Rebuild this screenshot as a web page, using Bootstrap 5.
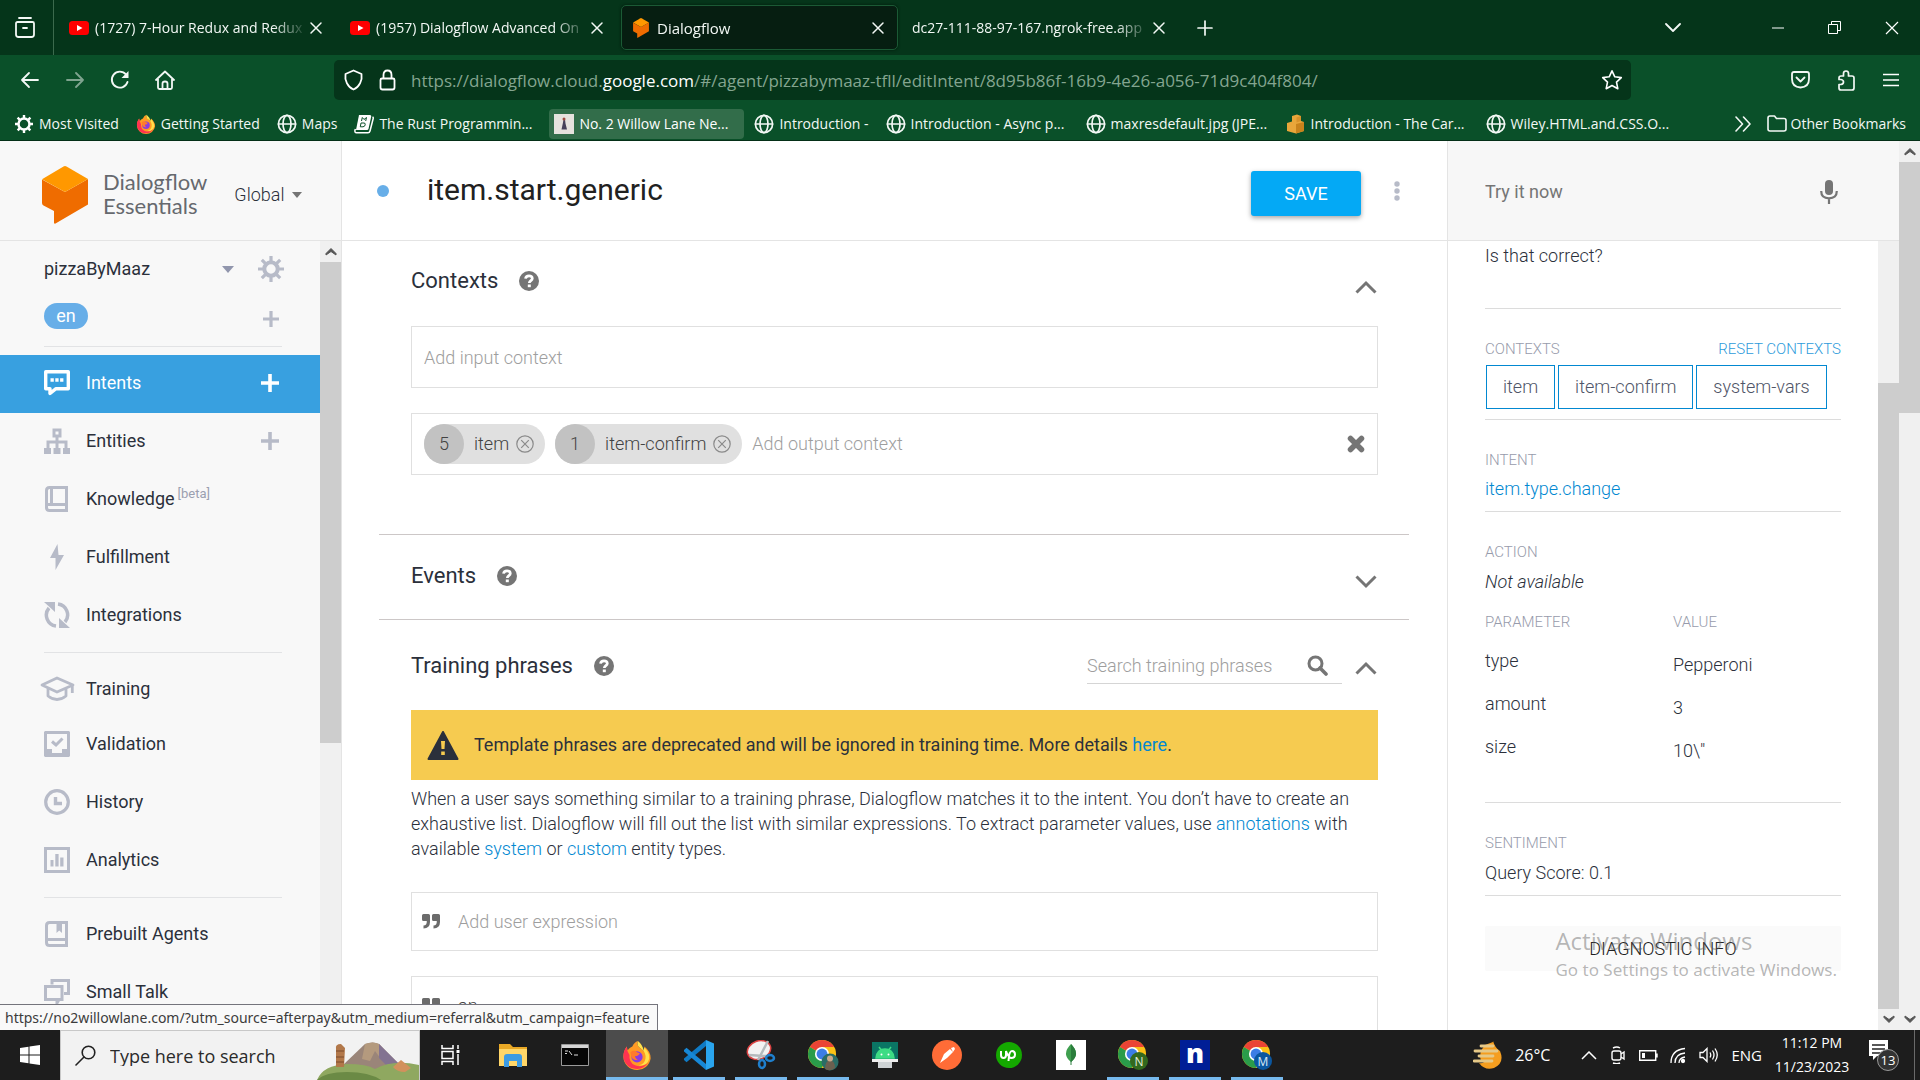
<!DOCTYPE html>
<html lang="en">
<head>
<meta charset="utf-8">
<meta name="viewport" content="width=device-width, initial-scale=1">
<title>Dialogflow</title>
<link href="https://cdn.jsdelivr.net/npm/bootstrap@5.3.0/dist/css/bootstrap.min.css" rel="stylesheet">
<script src="https://cdn.jsdelivr.net/npm/bootstrap@5.3.0/dist/js/bootstrap.bundle.min.js" defer></script>
<style>
  :root { --tabs:#05351a; --bar:#0a5029; --ink:#2b303b; --blue:#0288d1; --grey:#b7bbc8; --rule:#e0e0e0; }
  body { font-family:Roboto,"Liberation Sans",sans-serif; font-size:18px; line-height:24px; color:var(--ink); }
  button, input { font:inherit; }
  svg { display:block; flex:none; }
  a { text-decoration:none; }
  .plain-btn { background:none; border:0; padding:0; color:inherit; display:flex; align-items:center; justify-content:center; flex:none; }
  .ln { fill:none; stroke:currentColor; stroke-linecap:round; stroke-linejoin:round; }

  /* browser chrome */
  .chrome-ui { font-family:"Open Sans","Noto Sans",sans-serif; color:#f3f8f5; font-size:15px; line-height:20px; }
  .tab-strip { height:55px; background:var(--tabs); }
  .view-btn { width:54px; height:55px; padding-right:3px; border-right:1px solid #3c6a4d; }
  .tabs { padding-left:3px; }
  .tab-item { width:277px; height:45px; margin:0 2px; padding:0 12px 0 9px; border:1px solid transparent; border-radius:5px; gap:6px; }
  .tab-item.current { background:#061e11; border-color:#1b5a35; padding-left:11px; gap:8px; box-shadow:0 0 3px #021a0c; }
  .tab-text { flex:1; min-width:0; margin-right:-4px; overflow:hidden; white-space:nowrap; font-size:14px; -webkit-mask-image:linear-gradient(90deg,#000 calc(100% - 34px),transparent); mask-image:linear-gradient(90deg,#000 calc(100% - 34px),transparent); }
  .current .tab-text { font-size:15px; }
  .win-btn { width:57px; height:55px; }
  .tool-bar { height:52px; background:var(--bar); padding:5px 7px 7px; }
  .tool-btn { width:45px; height:40px; }
  .url-box { background:var(--tabs); border-radius:5px; height:40px; margin:0 147px 0 147px; padding:0 8px 0 9px; font-size:17px; color:#84a590; gap:15px; }
  .url-box b { font-weight:400; color:#fff; }
  .url-box [role=textbox] { padding-top:2px; }
  .mark-bar { height:34px; background:var(--bar); border-bottom:1px solid #042f17; padding:0 14px 0 9px; font-size:14px; }
  .mark-link { color:#f3f8f5; gap:5px; height:30px; padding:0 7px 0 5px; margin-right:5px; white-space:nowrap; border-radius:4px; }
  .mark-link.wide { width:195px; }
  .mark-link.hot { background:#326d4a; color:#fff; }

  /* left pane */
  .side-pane { width:342px; background:#f8f8f8; border-right:1px solid #e4e4e4; }
  .head-row { height:100px; border-bottom:1px solid #e4e4e4; flex:none; }
  .brand-row { padding:8px 0 0 42px; gap:15px; }
  .brand-name { font-family:Lato,sans-serif; font-size:22px; line-height:24px; color:#66696e; padding-bottom:2px; }
  .region-btn { margin-left:12px; }
  .agent-row { height:56px; padding:0 36px 0 44px; }
  .lang-row { height:49px; padding:6px 41px 0 0; margin-left:44px; }
  .lang-pill { background:#67aee8; color:#fff; height:26px; width:44px; border-radius:13px; line-height:25px; }
  .side-rule { border-top:1px solid #e2e3e5; margin:0 38px 0 44px; }
  .side-rule.parting { margin-top:7px; margin-bottom:8px; }
  .nav-row { height:58px; padding:0 41px 2px 44px; color:var(--ink); }
  .nav-row svg.ico { color:var(--grey); margin-right:16px; }
  .nav-row.chosen { background:#38a0e0; color:#fff; }
  .nav-row.chosen svg.ico, .nav-row.chosen .plus { color:#fff; }
  .nav-row.short { height:55px; padding-bottom:0; }
  .plus { color:var(--grey); }
  .beta { font-size:13px; color:#9ba0b0; margin:-10px 0 0 3px; }
  .sbar { width:21px; background:#f0f0f0; flex:none; color:#555; }
  .sbar .arrow { height:21px; display:flex; align-items:center; justify-content:center; flex:none; background:#f0f0f0; }
  .sbar .thumb { background:#cdcdcd; }

  /* centre pane */
  .intent-name { font-size:30px; line-height:36px; color:#212121; border:0; background:none; padding:0 0 2px; width:400px; }
  .state-dot { width:12px; height:12px; border-radius:50%; background:#67aee8; margin:0 38px 0 35px; }
  .save-btn { width:110px; height:45px; background:#04a9f5; color:#fff; border:0; border-radius:3px; font-size:18px; box-shadow:0 2px 5px rgba(0,0,0,.35); margin:5px 33px 0 0; }
  .save-btn:hover { background:#04a9f5; color:#fff; }
  .more-btn { padding-right:47px; }
  .sections { padding:0 38px 0 37px; }
  .block { padding:0 31px 0 32px; }
  .block + .block { border-top:1px solid #ccc7c7; }
  .block.contexts { padding-bottom:59px; }
  .block-head { height:84px; padding-bottom:2px; }
  .contexts .block-head { height:85px; padding-bottom:6px; }
  .phrases .block-head { height:90px; padding:2px 0 0; }
  .block-head h2 { font-size:22px; line-height:30px; font-weight:400; margin:0 21px 0 0; color:#2b303b; }
  .fold { width:24px; height:24px; color:#757575; margin-top:12px; }
  .phrases .fold { margin-top:4px; }
  .field { border:1px solid var(--rule); border-radius:0; height:62px; padding:0 12px; font-size:18px; font-weight:300; background:#fff; }
  .field.spaced { margin-bottom:25px; }
  .field input, input.bare { border:0; outline:0; background:none; padding:0; font-weight:300; min-width:0; color:#424242; }
  ::placeholder { color:#9e9e9e !important; opacity:1 !important; }
  .try-head ::placeholder { color:#757575 !important; }
  .chip { height:40px; border-radius:20px; background:#e0e0e0; padding-right:11px; margin-right:10px; color:#424242; font-weight:300; }
  .chip .life { width:40px; height:40px; border-radius:50%; background:#c2c2c2; margin-right:10px; }
  .chip .plain-btn { margin-left:7px; color:#8a8a8a; }
  .warn { background:#f6cb50; height:70px; padding:0 16px; gap:15px; margin:0 0 6px; }
  .blurb { font-weight:300; line-height:25px; margin:0 0 31px; }
  .warn a, .blurb a { color:var(--blue); }
  .find-box { width:255px; height:36px; border-bottom:1px solid #d5d5d5; margin:0 12px 0 auto; padding:0 14px 0 0; }
  .phrase { height:59px; padding:0 10px; margin-bottom:25px; gap:18px; }

  /* right pane */
  .try-pane { width:452px; border-left:1px solid #e4e4e4; }
  .try-head { background:#f7f7f7; padding:2px 61px 0 37px; }
  .try-body { padding:3px 37px 0; font-weight:300; }
  .try-body .part { padding-top:30px; }
  .last-line { padding-bottom:40px; margin:0; }
  .cap { font-size:15px; line-height:20px; color:#979bab; font-weight:300; margin:0; }
  .reset-link { color:#2d9bdb; }
  .part { border-top:1px solid #dcdcdc; }
  .ctx-list { gap:3px; padding:6px 0 10px 1px; }
  .ctx-chip { border:1px solid var(--blue); height:44px; padding:0 16px; background:#fff; color:#4f5568; font-weight:300; }
  .item-link { color:var(--blue); display:block; padding:7px 0 10px; }
  .action-part { padding-bottom:29px; }
  .action-part p { margin:8px 0 18px; }
  .name-col { width:188px; }
  .mood-part p { margin:8px 0 10px; }
  .param-table th { font-size:15px; line-height:20px; color:#979bab; font-weight:300; padding:0 0 12px; }
  .param-table td { padding:4px 0 13px; line-height:26px; font-weight:300; }
  .param-table td + td { padding:8px 0 9px; }
  .diag { background:#fafafa; border:0; height:45px; width:100%; border-radius:2px; color:#212121; }

  /* overlays */
  .status-url { position:absolute; left:0; bottom:50px; height:26px; background:#f9f9f9; border:1px solid #74747c; border-width:1px 1px 0 0; color:#3c3c3c; padding:0 7px 0 5px; font-family:"Noto Sans","Open Sans",sans-serif; font-size:14px; line-height:26px; z-index:5; white-space:nowrap; }
  .watermark { position:absolute; right:83px; bottom:97px; color:rgba(95,95,95,.45); font-family:"Open Sans","Noto Sans",sans-serif; z-index:4; pointer-events:none; white-space:nowrap; }
  .watermark div { font-size:24px; line-height:32px; }
  .watermark p { font-family:"Noto Sans","Open Sans",sans-serif; font-size:17px; line-height:26px; margin:0; }

  /* taskbar */
  .task-bar { height:50px; background:#1d1d1d; flex:none; color:#fff; }
  .start-btn { width:60px; }
  .task-search { width:360px; background:#f2f2f2; color:#222; border:1px solid #c8c8c8; border-bottom:0; padding-left:14px; overflow:hidden; }
  .task-search input { width:190px; margin-left:14px; font-family:inherit; font-size:18px; font-weight:400; color:#222; }
  .task-search ::placeholder { color:#2a2a2a !important; }
  .app-btn { width:62px; height:50px; position:relative; }
  .app-btn.open::after { content:""; position:absolute; left:5px; right:5px; bottom:0; height:3px; background:#76b9ed; }
  .app-btn.front { background:#4c4c4c; }
  .app-btn.front::after { left:0; right:0; }
  .tray { gap:12px; }
  .weather { font-size:16px; margin-right:19px; }
  .clock { width:88px; line-height:24px; font-size:14px; margin-left:-6px; }
  .show-desktop { width:6px; height:50px; border-left:1px solid #6a6a6a; }
  svg text { font-family:"Open Sans",sans-serif; }
</style>
</head>
<body class="vh-100 d-flex flex-column overflow-hidden bg-white position-relative">

<svg width="0" height="0" class="position-absolute" aria-hidden="true">
  <symbol id="x" viewBox="0 0 14 14"><path class="ln" stroke-width="1.5" d="M2 2l10 10M12 2L2 12"/></symbol>
  <symbol id="yt" viewBox="0 0 20 14"><rect width="20" height="14" rx="3.5" fill="#f00"/><path d="M8 4l5.500 3L8 10z" fill="#fff"/></symbol>
  <symbol id="globe" viewBox="0 0 20 20"><g class="ln" stroke-width="1.700"><circle cx="10" cy="10" r="8.600"/><ellipse cx="10" cy="10" rx="4" ry="8.600"/><path d="M1.500 10h17"/></g></symbol>
  <symbol id="df" viewBox="0 0 46 58"><path fill="#ef6c00" d="M0 13.500L23 26l23-13v25.500L13.500 57.500C12.500 58 12 57.500 12 56.500V45L1.500 39.500Q0 38.500 0 37z"/><path fill="#ff9800" d="M21.500.5q1.500-.8 3 0L46 13 23 26 0 13.300z"/></symbol>
  <symbol id="plus" viewBox="0 0 18 18"><path d="M7.200 0h3.600v7.200H18v3.600h-7.200V18H7.200v-7.200H0V7.200h7.200z" fill="currentColor"/></symbol>
  <symbol id="help" viewBox="0 0 20 20"><circle cx="10" cy="10" r="10" fill="#757575"/><path d="M6.500 7.600Q6.900 4.900 10 4.900t3.300 2.500c0 2.200-3 2.300-3 4.700" fill="none" stroke="#fff" stroke-width="2.700"/><rect x="8.800" y="13.500" width="3" height="2.700" fill="#fff"/></symbol>
  <symbol id="up" viewBox="0 0 22 14"><path d="M1.500 12.500L11 3l9.500 9.500" fill="none" stroke="currentColor" stroke-width="3"/></symbol>
  <symbol id="down" viewBox="0 0 22 14"><path d="M1.500 1.500L11 11l9.500-9.500" fill="none" stroke="currentColor" stroke-width="3"/></symbol>
  <symbol id="sup" viewBox="0 0 12 9"><path d="M1 8V6.500l5-5 5 5V8L6 4.500z" fill="currentColor" stroke="currentColor"/></symbol>
  <symbol id="sdn" viewBox="0 0 12 9"><path d="M1 1v1.500l5 5 5-5V1L6 4.500z" fill="currentColor" stroke="currentColor"/></symbol>
  <symbol id="cx" viewBox="0 0 18 18"><g fill="none" stroke="currentColor" stroke-width="1.200"><circle cx="9" cy="9" r="8.200"/><path d="M5.200 5.200l7.600 7.600M12.800 5.200l-7.600 7.600"/></g></symbol>
  <symbol id="quote" viewBox="0 0 18 15"><path fill="#6b6b6b" d="M1.500 0h5Q8 0 8 1.500V8q0 6-6.500 6.500V11.500Q5 11.500 4.800 7H1.500Q0 7 0 5.500v-4Q0 0 1.500 0zM11.500 0h5Q18 0 18 1.500V8q0 6-6.500 6.500V11.500q3.500 0 3.300-4.500h-3.300Q10 7 10 5.500v-4Q10 0 11.500 0z"/></symbol>
  <symbol id="ff" viewBox="0 0 32 32"><path d="M17 1q-2 5 3 8 2 1 3 3l1-5q7 6 6.500 13A14.500 14.500 0 0 1 16 32 14.500 14.500 0 0 1 1.500 18Q1.500 12 5 7l1 4q2-3 5-4 2-5 6-6z" fill="#ff9a24"/><path d="M17 1q-2 5 3 8 6 4 5 11-1 6-7 7 9 1 11-7 1-5-5-12l-1 3q-1-6-6-10z" fill="#ffe04a"/><path d="M5 7q-5 7-3 14a14.500 14.500 0 0 0 26 3q-6 6-14 3-7-3-6-11Q5 12 5 7z" fill="#ff3350"/><circle cx="16" cy="18" r="6" fill="#8a3be2"/><path d="M9 13q4-3 7 0l3 1q-1 3-5 3 0 3 3 4-5 1-7-3z" fill="#ff7b2b"/></symbol>
  <symbol id="chromeico" viewBox="0 0 32 32"><circle cx="16" cy="16" r="15" fill="#fbc116"/><path d="M16 16L3 8.500A15 15 0 0 1 29 8.500H16z" fill="#ea4335"/><path d="M3 8.500a15 15 0 0 0 12.500 22.500L22 20z" fill="#2a9c4a"/><path d="M16 8.500h13L22 19z" fill="#fbc116"/><circle cx="16" cy="16" r="7.500" fill="#fff"/><circle cx="16" cy="16" r="5.800" fill="#3c7de6"/></symbol>
</svg>

<header class="chrome-ui flex-shrink-0">
  <div class="tab-strip d-flex align-items-center">
    <button class="plain-btn view-btn" aria-label="Firefox View"><svg width="20" height="21" viewBox="0 0 20 21"><g class="ln" stroke-width="1.800"><path d="M4 1h12M1 6.500Q1 5 2.500 5h15Q19 5 19 6.500v11q0 2.500-2.500 2.500h-13Q1 20 1 17.500zM8 11h4"/></g></svg></button>
    <div class="tabs d-flex">
      <div class="tab-item d-flex align-items-center"><svg width="20" height="14"><use href="#yt"/></svg><span class="tab-text">(1727) 7-Hour Redux and Redux</span><button class="plain-btn" aria-label="Close tab"><svg width="14" height="14"><use href="#x"/></svg></button></div>
      <div class="tab-item d-flex align-items-center"><svg width="20" height="14"><use href="#yt"/></svg><span class="tab-text">(1957) Dialogflow Advanced On</span><button class="plain-btn" aria-label="Close tab"><svg width="14" height="14"><use href="#x"/></svg></button></div>
      <div class="tab-item current d-flex align-items-center"><svg width="16" height="20"><use href="#df"/></svg><span class="tab-text">Dialogflow</span><button class="plain-btn" aria-label="Close tab"><svg width="14" height="14"><use href="#x"/></svg></button></div>
      <div class="tab-item d-flex align-items-center"><span class="tab-text">dc27-111-88-97-167.ngrok-free.app</span><button class="plain-btn" aria-label="Close tab"><svg width="14" height="14"><use href="#x"/></svg></button></div>
    </div>
    <button class="plain-btn ms-2 px-2" aria-label="New tab"><svg width="16" height="16" viewBox="0 0 16 16"><path class="ln" stroke-width="1.700" d="M8 1v14M1 8h14"/></svg></button>
    <div class="d-flex ms-auto">
      <button class="plain-btn win-btn me-5" aria-label="List tabs"><svg width="16" height="10" viewBox="0 0 16 10"><path class="ln" stroke-width="1.800" d="M1 1l7 7 7-7"/></svg></button>
      <button class="plain-btn win-btn" aria-label="Minimize"><svg width="12" height="2"><path d="M0 1h12" stroke="#fff"/></svg></button>
      <button class="plain-btn win-btn" aria-label="Restore"><svg width="13" height="13" viewBox="0 0 13 13"><path d="M.5 3.500h9v9h-9zM3.500 3V.5h9v9H10" fill="none" stroke="#fff"/></svg></button>
      <button class="plain-btn win-btn" aria-label="Close"><svg width="14" height="14" viewBox="0 0 14 14"><path d="M1 1l12 12M13 1L1 13" stroke="#fff" stroke-width="1.200"/></svg></button>
    </div>
  </div>
  <div class="tool-bar d-flex align-items-center">
    <button class="plain-btn tool-btn" aria-label="Back"><svg width="20" height="18" viewBox="0 0 20 18"><path class="ln" stroke-width="1.800" d="M18 9H2M9 2L2 9l7 7"/></svg></button>
    <button class="plain-btn tool-btn opacity-50" aria-label="Forward"><svg width="20" height="18" viewBox="0 0 20 18"><path class="ln" stroke-width="1.800" d="M2 9h16M11 2l7 7-7 7"/></svg></button>
    <button class="plain-btn tool-btn" aria-label="Reload"><svg width="20" height="20" viewBox="0 0 20 20"><path class="ln" stroke-width="1.900" d="M17.500 12A8 8 0 1 1 16 4.500"/><path d="M18.500 1v7h-7z" fill="currentColor"/></svg></button>
    <button class="plain-btn tool-btn" aria-label="Home"><svg width="20" height="20" viewBox="0 0 20 20"><path class="ln" stroke-width="1.800" d="M1 10l9-8.500 9 8.500M3 9v8.500Q3 19 4.500 19h11q1.500 0 1.500-1.500V9M7.500 19v-5.500q0-2 2.500-2t2.500 2V19"/></svg></button>
    <div class="url-box d-flex align-items-center flex-grow-1">
      <svg width="21" height="22" viewBox="0 0 21 22" class="text-white"><path class="ln" stroke-width="1.800" d="M10.500 1.500l8 3.500c1 6-2 13-8 15.500C4.500 18 1.500 11 2.500 5z"/></svg>
      <svg width="17" height="22" viewBox="0 0 17 22" class="text-white"><path class="ln" stroke-width="1.800" d="M4.500 9V6q0-4.500 4-4.500t4 4.500v3M3 9.500h11q1.500 0 1.500 1.500v7.500q0 2-2 2h-10q-2 0-2-2V11q0-1.500 1.500-1.500z"/></svg>
      <div class="flex-grow-1 text-nowrap overflow-hidden" role="textbox" aria-label="Address">https://dialogflow.cloud.<b>google.com</b>/#/agent/pizzabymaaz-tfll/editIntent/8d95b86f-16b9-4e26-a056-71d9c404f804/</div>
      <button class="plain-btn text-white" aria-label="Bookmark this page"><svg width="22" height="22" viewBox="0 0 22 22"><path class="ln" stroke-width="1.600" d="M11 1.800l2.800 6 6.500.8-4.800 4.500 1.300 6.600L11 16.500l-5.800 3.200 1.300-6.600L1.700 8.600l6.500-.8z"/></svg></button>
    </div>
    <button class="plain-btn tool-btn" aria-label="Pocket"><svg width="19" height="18" viewBox="0 0 19 18"><path class="ln" stroke-width="1.800" d="M3 1h13q2 0 2 2v5q0 8-8.500 8.500Q1 16 1 8V3q0-2 2-2zM5.500 6.500l4 4 4-4"/></svg></button>
    <button class="plain-btn tool-btn" aria-label="Extensions"><svg width="18" height="21" viewBox="0 0 18 21"><path class="ln" stroke-width="1.700" d="M6.500 6V3.500Q6.500 1 9 1t2.500 2.500V6H15q2 0 2 2v10q0 2-2 2H4q-2 0-2-2v-3.500h2Q6.500 14 6.500 12T4 9.500H2V8q0-2 2-2z"/></svg></button>
    <button class="plain-btn tool-btn" aria-label="Menu"><svg width="16" height="14" viewBox="0 0 16 14"><path d="M0 1.500h16M0 7h16M0 12.500h16" stroke="#fff" stroke-width="1.600"/></svg></button>
  </div>
  <nav class="mark-bar d-flex align-items-center" aria-label="Bookmarks">
    <a href="#" class="mark-link d-flex align-items-center"><svg width="20" height="20" viewBox="0 0 20 20"><circle cx="10" cy="10" r="5.500" fill="none" stroke="#fff" stroke-width="2.500"/><path d="M10 1v18M1 10h18M3.600 3.600l12.800 12.800M16.400 3.600L3.600 16.400" stroke="#fff" stroke-width="2.400" stroke-dasharray="3.500 11 3.500"/></svg><span>Most Visited</span></a>
    <a href="#" class="mark-link d-flex align-items-center"><svg width="20" height="20"><use href="#ff"/></svg><span>Getting Started</span></a>
    <a href="#" class="mark-link d-flex align-items-center"><svg width="20" height="20"><use href="#globe"/></svg><span>Maps</span></a>
    <a href="#" class="mark-link wide d-flex align-items-center"><svg width="20" height="20" viewBox="0 0 20 20"><path d="M5 1h11q1.500 0 1.200 1.500L14.500 15q-.3 1-1.500 1H2z" fill="#fff"/><path d="M18.500 3q1 .5.700 1.500L16 17q-.5 1.800-2 1.800H2.500Q.500 18.800 1 16l.5-1" fill="none" stroke="#fff" stroke-width="1.500"/><path d="M7.500 7l.8-3.500 1.700 2 2.500-2L11.700 7M7 9h3q1.500 0 1.200 1.800T9 12.800H6.300z" fill="none" stroke="#0a5029"/></svg><span>The Rust Programmin...</span></a>
    <a href="#" class="mark-link wide hot d-flex align-items-center"><svg width="20" height="20" viewBox="0 0 20 20"><path fill="#e6e2de" d="M0 0h20v20H0z"/><path d="M9.500 5.500h1.500l.5 4 1.500 6H7.500l1.300-6z" fill="#46405a"/><circle cx="10" cy="5" r="1.500" fill="#a04a40"/></svg><span>No. 2 Willow Lane Ne...</span></a>
    <a href="#" class="mark-link d-flex align-items-center"><svg width="20" height="20"><use href="#globe"/></svg><span>Introduction -</span></a>
    <a href="#" class="mark-link wide d-flex align-items-center"><svg width="20" height="20"><use href="#globe"/></svg><span>Introduction - Async p...</span></a>
    <a href="#" class="mark-link wide d-flex align-items-center"><svg width="20" height="20"><use href="#globe"/></svg><span>maxresdefault.jpg (JPE...</span></a>
    <a href="#" class="mark-link wide d-flex align-items-center"><svg width="20" height="20" viewBox="0 0 20 20"><path d="M6 2l5-1.500L15 2v5l3 1v9l-8 2.500L1 17V9l5-1.500z" fill="#e9a63a"/><path d="M10 10l8-2v9l-8 2.500z" fill="#c9831c"/><path d="M10.500 3.500L15 2v5l-4.500 1.500z" fill="#d8922a"/></svg><span>Introduction - The Car...</span></a>
    <a href="#" class="mark-link wide d-flex align-items-center"><svg width="20" height="20"><use href="#globe"/></svg><span>Wiley.HTML.and.CSS.O...</span></a>
    <button class="plain-btn ms-auto me-3" aria-label="More bookmarks"><svg width="16" height="16" viewBox="0 0 16 16"><path class="ln" stroke-width="1.600" d="M1 1l6.500 7L1 15M8.500 1L15 8l-6.500 7"/></svg></button>
    <button class="plain-btn gap-1"><svg width="20" height="17" viewBox="0 0 20 17"><path class="ln" stroke-width="1.600" d="M3 1h4.500l2 2.500H17q2 0 2 2V14q0 2-2 2H3q-2 0-2-2V3q0-2 2-2z"/></svg>Other Bookmarks</button>
  </nav>
</header>

<div class="d-flex flex-grow-1 overflow-hidden">
  <aside class="side-pane d-flex flex-column flex-shrink-0">
    <div class="head-row brand-row d-flex align-items-center">
      <svg width="46" height="58"><use href="#df"/></svg>
      <div class="brand-name">Dialogflow<br>Essentials</div>
      <button class="plain-btn region-btn fw-light gap-2">Global <svg width="10" height="6"><path d="M0 0h10L5 6z" fill="#757575"/></svg></button>
    </div>
    <div class="d-flex flex-grow-1 overflow-hidden">
      <div class="flex-grow-1 overflow-hidden">
        <div class="agent-row d-flex align-items-center"><span class="me-auto">pizzaByMaaz</span>
          <button class="plain-btn me-4" aria-label="Switch agent"><svg width="12" height="7"><path d="M0 0h12L6 7z" fill="#9196ad"/></svg></button>
          <button class="plain-btn plus" aria-label="Agent settings"><svg width="26" height="26" viewBox="0 0 26 26"><circle cx="13" cy="13" r="6.700" fill="none" stroke="currentColor" stroke-width="4"/><path d="M13 0v26M0 13h26M3.800 3.800l18.400 18.400M22.200 3.800L3.800 22.200" stroke="currentColor" stroke-width="3.200" stroke-dasharray="5 16 5"/></svg></button></div>
        <div class="lang-row d-flex justify-content-between"><span class="lang-pill text-center">en</span><button class="plain-btn plus align-items-start pt-2" aria-label="Add language"><svg width="16" height="16"><use href="#plus"/></svg></button></div>
        <div class="side-rule mb-2"></div>
        <nav aria-label="Agent">
          <a href="#" class="nav-row chosen d-flex align-items-center"><svg class="ico" width="26" height="26" viewBox="0 0 26 26"><path d="M1.700 1.700h22.600v17H12L6 23.500v-4.800H1.700z" fill="none" stroke="currentColor" stroke-width="3.400" stroke-linejoin="round"/><path d="M6.500 8.200h3.300v3.600H6.500zM11.300 8.200h3.300v3.600h-3.300zM16.100 8.200h3.300v3.600h-3.300z" fill="currentColor"/></svg>Intents<svg class="plus ms-auto" width="18" height="18"><use href="#plus"/></svg></a>
          <a href="#" class="nav-row d-flex align-items-center"><svg class="ico" width="26" height="26" viewBox="0 0 26 26" fill="none" stroke="currentColor"><rect x="10" y="2" width="6" height="6" stroke-width="3"/><path d="M13 9v11M4 20v-6h18v6" stroke-width="3"/><path d="M0 20h7v6H0zM9.500 20h7v6h-7zM19 20h7v6h-7z" fill="currentColor" stroke="none"/></svg>Entities<svg class="plus ms-auto" width="18" height="18"><use href="#plus"/></svg></a>
          <a href="#" class="nav-row d-flex align-items-center"><svg class="ico" width="26" height="26" viewBox="0 0 26 26" fill="none" stroke="currentColor" stroke-width="3"><path d="M5.500 1.500h17v23h-17q-3 0-3-3v-17q0-3 3-3zM3 18.500h19M7.500 2v16" /></svg>Knowledge<span class="beta">[beta]</span></a>
          <a href="#" class="nav-row d-flex align-items-center"><svg class="ico" width="26" height="26" viewBox="0 0 26 26"><path d="M13.500 0L6 14h5.500L11.500 26 20 11h-5.500z" fill="currentColor"/></svg>Fulfillment</a>
          <a href="#" class="nav-row d-flex align-items-center"><svg class="ico" width="26" height="26" viewBox="0 0 26 26"><path d="M12 24A11 11 0 0 1 5 6M14 2a11 11 0 0 1 7 18" fill="none" stroke="currentColor" stroke-width="3.500"/><path d="M0 0h11v10zM26 26H15V16z" fill="currentColor"/></svg>Integrations</a>
          <div class="side-rule parting"></div>
          <a href="#" class="nav-row short d-flex align-items-center"><svg class="ico overflow-visible" width="26" height="26" viewBox="0 0 26 26"><path d="M-2 9L13 2l16 7-16 7zM4 12v8q9 7 18 0v-8M28.300 9v8" fill="none" stroke="currentColor" stroke-width="2.800" stroke-linejoin="round"/></svg>Training</a>
          <a href="#" class="nav-row d-flex align-items-center"><svg class="ico" width="26" height="26" viewBox="0 0 26 26"><path fill-rule="evenodd" d="M1 0h24l1 1v24l-1 1H1l-1-1V1zM3 3v15h5v4h10v-4h5V3z" fill="currentColor"/><path d="M8 10.500l4 3.500 6.500-6.500" fill="none" stroke="currentColor" stroke-width="3"/></svg>Validation</a>
          <a href="#" class="nav-row d-flex align-items-center"><svg class="ico" width="26" height="26" viewBox="0 0 26 26" fill="none" stroke="currentColor"><circle cx="13" cy="13" r="11.300" stroke-width="3.200"/><path d="M11.500 8v6.500h6.500" stroke-width="3.400"/></svg>History</a>
          <a href="#" class="nav-row d-flex align-items-center"><svg class="ico" width="26" height="26" viewBox="0 0 26 26"><rect x="1.500" y="1.500" width="23" height="23" fill="none" stroke="currentColor" stroke-width="3"/><path d="M6.500 13h3v6.500h-3zM11.300 7h3.300v12.500h-3.300zM16.200 10.500h3.300v9h-3.300z" fill="currentColor"/></svg>Analytics</a>
          <div class="side-rule parting"></div>
          <a href="#" class="nav-row d-flex align-items-center"><svg class="ico" width="26" height="26" viewBox="0 0 26 26"><path d="M5.500 1.500h17v23h-17q-3 0-3-3v-17q0-3 3-3zM3 18.500h19" fill="none" stroke="currentColor" stroke-width="3"/><path d="M12.500 1H18v11l-2.800-2.500L12.500 12z" fill="currentColor"/></svg>Prebuilt Agents</a>
          <a href="#" class="nav-row d-flex align-items-center"><svg class="ico" width="26" height="26" viewBox="0 0 26 26" fill="none" stroke="currentColor" stroke-width="3"><path d="M8 5.500v-4h16.500v13H20M1.500 7.500H18v13h-3L13 24v-3.500H1.500z"/></svg>Small Talk</a>
        </nav>
      </div>
      <div class="sbar d-flex flex-column"><div class="arrow"><svg width="12" height="9"><use href="#sup"/></svg></div><div class="thumb" style="height:61%"></div></div>
    </div>
  </aside>

  <main class="d-flex flex-column flex-grow-1 overflow-hidden">
    <div class="head-row d-flex align-items-center">
      <span class="state-dot"></span>
      <input class="intent-name me-auto" aria-label="Intent name" value="item.start.generic">
      <button class="btn save-btn">SAVE</button>
      <button class="plain-btn more-btn" aria-label="More"><svg width="6" height="20" class="plus"><circle cx="3" cy="3" r="2.700" fill="currentColor"/><circle cx="3" cy="10" r="2.700" fill="currentColor"/><circle cx="3" cy="17" r="2.700" fill="currentColor"/></svg></button>
    </div>
    <div class="sections flex-grow-1 overflow-hidden">
      <section class="block contexts">
        <div class="block-head d-flex align-items-center"><h2>Contexts</h2><svg width="20" height="20"><use href="#help"/></svg><button class="plain-btn fold ms-auto" aria-label="Collapse contexts"><svg width="22" height="14"><use href="#up"/></svg></button></div>
        <input class="form-control field spaced" aria-label="Add input context" placeholder="Add input context">
        <div class="field d-flex align-items-center">
          <span class="chip d-flex align-items-center"><span class="life d-flex align-items-center justify-content-center">5</span>item<button class="plain-btn" aria-label="Remove item"><svg width="18" height="18"><use href="#cx"/></svg></button></span>
          <span class="chip d-flex align-items-center"><span class="life d-flex align-items-center justify-content-center">1</span>item-confirm<button class="plain-btn" aria-label="Remove item-confirm"><svg width="18" height="18"><use href="#cx"/></svg></button></span>
          <input class="flex-grow-1" aria-label="Add output context" placeholder="Add output context">
          <button class="plain-btn" aria-label="Clear contexts"><svg width="18" height="18" viewBox="0 0 18 18"><path d="M3.500 3.500l11 11M14.500 3.500l-11 11" stroke="#757575" stroke-width="5.500" stroke-linecap="round"/></svg></button>
        </div>
      </section>
      <section class="block">
        <div class="block-head d-flex align-items-center"><h2>Events</h2><svg width="20" height="20"><use href="#help"/></svg><button class="plain-btn fold ms-auto" aria-label="Expand events"><svg width="22" height="14"><use href="#down"/></svg></button></div>
      </section>
      <section class="block phrases">
        <div class="block-head d-flex align-items-center"><h2>Training phrases</h2><svg width="20" height="20"><use href="#help"/></svg>
          <div class="find-box d-flex align-items-center"><input class="bare flex-grow-1" aria-label="Search training phrases" placeholder="Search training phrases"><svg width="21" height="21" viewBox="0 0 21 21"><circle cx="8.500" cy="8.500" r="6.500" fill="none" stroke="#757575" stroke-width="3"/><path d="M13 13l6 6" stroke="#757575" stroke-width="3.600" stroke-linecap="round"/></svg></div>
          <button class="plain-btn fold" aria-label="Collapse training phrases"><svg width="22" height="14"><use href="#up"/></svg></button></div>
        <div class="warn d-flex align-items-center" role="alert"><svg width="32" height="29" viewBox="0 0 32 29"><path d="M16 1l14.500 27h-29z" fill="#2b303b" stroke="#2b303b" stroke-width="2" stroke-linejoin="round"/><path d="M14 10h4l-.5 8h-3zM14.200 20.500h3.600V24h-3.600z" fill="#f6cb50"/></svg><span>Template phrases are deprecated and will be ignored in training time. More details <a href="#">here</a>.</span></div>
        <p class="blurb">When a user says something similar to a training phrase, Dialogflow matches it to the intent. You don’t have to create an exhaustive list. Dialogflow will fill out the list with similar expressions. To extract parameter values, use <a href="#">annotations</a> with available <a href="#">system</a> or <a href="#">custom</a> entity types.</p>
        <div class="field phrase d-flex align-items-center"><svg width="18" height="15"><use href="#quote"/></svg><input class="flex-grow-1" aria-label="Add user expression" placeholder="Add user expression"></div>
        <div class="field phrase d-flex align-items-center"><svg width="18" height="15"><use href="#quote"/></svg><input class="flex-grow-1" aria-label="Training phrase" value="an"></div>
      </section>
    </div>
  </main>

  <aside class="try-pane d-flex flex-column flex-shrink-0">
    <div class="head-row try-head d-flex align-items-center"><input class="bare flex-grow-1 fw-normal" aria-label="Try it now" placeholder="Try it now"><button class="plain-btn" aria-label="Use microphone"><svg width="18" height="24" viewBox="0 0 18 24"><rect x="5" y="0" width="8" height="15" rx="4" fill="#757575"/><path d="M1.200 11q0 7.300 7.800 7.300t7.800-7.300M9 18v6" fill="none" stroke="#757575" stroke-width="2.200"/></svg></button></div>
    <div class="d-flex flex-grow-1 overflow-hidden">
      <div class="try-body flex-grow-1 overflow-hidden">
        <p class="last-line">Is that correct?</p>
        <div class="part">
          <div class="d-flex justify-content-between"><h3 class="cap">CONTEXTS</h3><a href="#" class="cap reset-link">RESET CONTEXTS</a></div>
          <div class="d-flex ctx-list"><button class="ctx-chip">item</button><button class="ctx-chip">item-confirm</button><button class="ctx-chip">system-vars</button></div>
        </div>
        <div class="part"><h3 class="cap">INTENT</h3><a href="#" class="item-link">item.type.change</a></div>
        <div class="part action-part"><h3 class="cap">ACTION</h3><p class="fst-italic">Not available</p>
          <table class="param-table w-100"><thead><tr><th scope="col" class="name-col">PARAMETER</th><th scope="col">VALUE</th></tr></thead>
          <tbody><tr><td>type</td><td>Pepperoni</td></tr><tr><td>amount</td><td>3</td></tr><tr><td>size</td><td>10\"</td></tr></tbody></table></div>
        <div class="part mood-part"><h3 class="cap">SENTIMENT</h3><p>Query Score: 0.1</p></div>
        <div class="part"><button class="diag">DIAGNOSTIC INFO</button></div>
      </div>
      <div class="sbar d-flex flex-column"><div class="thumb mt-auto" style="height:79.300%"></div><div class="arrow"><svg width="12" height="9"><use href="#sdn"/></svg></div></div>
    </div>
  </aside>
  <div class="sbar d-flex flex-column"><div class="arrow"><svg width="12" height="9"><use href="#sup"/></svg></div><div class="thumb mb-auto" style="height:28.200%"></div><div class="arrow"><svg width="12" height="9"><use href="#sdn"/></svg></div></div>
</div>

<div class="status-url">https://no2willowlane.com/?utm_source=afterpay&amp;utm_medium=referral&amp;utm_campaign=feature</div>
<div class="watermark"><div>Activate Windows</div><p>Go to Settings to activate Windows.</p></div>

<footer class="task-bar chrome-ui d-flex">
  <button class="plain-btn start-btn" aria-label="Start"><svg width="20" height="20" viewBox="0 0 20 20"><path d="M0 3l8.500-1.200v7.700H0zM9.500 1.600L20 0v9.500H9.500zM0 10.500h8.500v7.700L0 17zM9.500 10.500H20V20L9.500 18.400z" fill="#fff"/></svg></button>
  <div class="task-search d-flex align-items-center">
    <svg width="21" height="21" viewBox="0 0 21 21"><g class="ln" stroke="#111" stroke-width="1.600"><circle cx="13.500" cy="7.500" r="6.300"/><path d="M9 12l-8 8"/></g></svg>
    <input class="bare" type="search" aria-label="Search" placeholder="Type here to search">
    <svg width="102" height="49" viewBox="0 0 102 49" class="ms-auto"><path d="M26 34L48 13q8-3 14 0l22 22-12 10H30z" fill="#9a8579"/><path d="M48 13q8-3 14 0l8 9-6 6-6-8-5 10-8-2z" fill="#b49a7e"/><path d="M62 13l22 22-8 6-14-14z" fill="#837391"/><path d="M0 49Q6 34 30 33q20 0 28 5 18-10 44-4v15z" fill="#8fa860"/><path d="M0 49q8-8 30-8t34 8z" fill="#6b8a45"/><path d="M19 36V18q-1-5 5-5l4 4-1 19z" fill="#b2784a"/><path d="M19 20h8M19 26h8M19 31h8" stroke="#7b4a2c"/><path d="M76 36l8-7 10 8-6 4q-8 0-12-5z" fill="#d2915c"/></svg>
  </div>
  <div class="d-flex">
    <button class="plain-btn app-btn" aria-label="Task view"><svg width="20" height="20" viewBox="0 0 20 20"><path d="M1 0v3.500h11V0M1 20v-3.500h11V20M1 6.500h11v7H1zM17 0v4M17 9v11" fill="none" stroke="#fff" stroke-width="1.500"/><path d="M15.500 5h3v3h-3z" fill="#fff"/></svg></button>
    <button class="plain-btn app-btn" aria-label="File Explorer"><svg width="28" height="24" viewBox="0 0 28 24"><path d="M0 1h11l3 3h14v19H0z" fill="#e9a825"/><path d="M0 6h28v17H0z" fill="#ffd668"/><path d="M5 24V14q0-3 3-3h12q3 0 3 3v10h-5v-6h-8v6z" fill="#3d9be2"/></svg></button>
    <button class="plain-btn app-btn" aria-label="Command Prompt"><svg width="28" height="22" viewBox="0 0 28 22"><path fill="#060606" stroke="#9a9a9a" d="M.5.5h27v21H.5z"/><path d="M1 1h26v3H1z" fill="#d5d5d5"/><path d="M4 7h3M4 9.500h2M8 7l3 4M13 11h4" stroke="#ddd"/></svg></button>
    <button class="plain-btn app-btn front open" aria-label="Firefox"><svg width="30" height="30"><use href="#ff"/></svg></button>
    <button class="plain-btn app-btn open" aria-label="Visual Studio Code"><svg width="30" height="30" viewBox="0 0 30 30"><path d="M0 20l2.500 2.300L22 6V0L0 18.500z" fill="#0f7ac4"/><path d="M0 10l2.500-2.300L22 24v6L0 11.500z" fill="#1788d6"/><path d="M22 0l8 3.500v23L22 30z" fill="#2aa5ee"/></svg></button>
    <button class="plain-btn app-btn open" aria-label="Snip"><svg width="30" height="30" viewBox="0 0 30 30"><ellipse cx="13" cy="10" rx="12" ry="9" fill="#f3f3f3" stroke="#d44" stroke-width="1.500" transform="rotate(-20 13 10)"/><path d="M22 1L12 20M3 15l17 1" stroke="#b5babd" stroke-width="2.500"/><g fill="none" stroke="#1f7fcc" stroke-width="2.500"><ellipse cx="16" cy="24" rx="3" ry="4"/><ellipse cx="24" cy="18" rx="4" ry="3"/></g></svg></button>
    <button class="plain-btn app-btn open" aria-label="Chrome"><svg width="32" height="32" viewBox="0 0 32 32"><use href="#chromeico" width="30" height="30"/><circle cx="23" cy="23" r="8.500" fill="#2a6d66"/><path d="M18 30q0-8 5-9 5 1 5 8-5 4-10 1z" fill="#6b6050"/><circle cx="23" cy="19.500" r="3" fill="#caa98c"/></svg></button>
    <button class="plain-btn app-btn" aria-label="Android Studio"><svg width="26" height="26" viewBox="0 0 26 26"><path d="M0 0h26v17H0z" fill="#0a7564"/><path d="M4 16q1-9 9-9t9 9zM7 5l3 4M19 5l-3 4" fill="#3ddc84" stroke="#3ddc84" stroke-width="1.500"/><circle cx="9.500" cy="12.500" r="1" fill="#fff"/><circle cx="16.500" cy="12.500" r="1" fill="#fff"/><path d="M0 17h26v3H0z" fill="#eee"/><path d="M6 20h14v6H6z" fill="#cfd3d5"/></svg></button>
    <button class="plain-btn app-btn" aria-label="Postman"><svg width="30" height="30" viewBox="0 0 30 30"><circle cx="15" cy="15" r="15" fill="#ff6c37"/><path d="M8 23l4-9 6-5 3 3-6 6zM19 8l3-1 1 2-2 3z" fill="#fff"/></svg></button>
    <button class="plain-btn app-btn" aria-label="Upwork"><svg width="26" height="26" viewBox="0 0 26 26"><circle cx="13" cy="13" r="13" fill="#14a800"/><path d="M5 9v4q0 3 2.500 3t2.500-3V9q2 6 5 7 4 0 4-3.500T16 9q-3 0-3.500 10" fill="none" stroke="#fff" stroke-width="2"/></svg></button>
    <button class="plain-btn app-btn" aria-label="MongoDB Compass"><svg width="30" height="30" viewBox="0 0 30 30"><path fill="#fff" d="M0 0h30v30H0z"/><path d="M15 4q10 10 0 18-10-8 0-18z" fill="#3f9f4f"/><path d="M15 4q10 10 0 18z" fill="#2b7d3c"/><path d="M15 20v5" stroke="#2b7d3c"/></svg></button>
    <button class="plain-btn app-btn open" aria-label="Chrome profile N"><svg width="32" height="32" viewBox="0 0 32 32"><use href="#chromeico" width="30" height="30"/><circle cx="22" cy="22" r="9" fill="#33691e"/><text x="22" y="26.500" font-size="12" text-anchor="middle" fill="#e6f0df">N</text></svg></button>
    <button class="plain-btn app-btn open" aria-label="nodepad"><svg width="30" height="30" viewBox="0 0 30 30"><path fill="#001e96" d="M0 0h30v30H0z"/><text x="15" y="23" font-size="27" font-weight="800" text-anchor="middle" fill="#fff">n</text></svg></button>
    <button class="plain-btn app-btn open" aria-label="Chrome profile M"><svg width="32" height="32" viewBox="0 0 32 32"><use href="#chromeico" width="30" height="30"/><circle cx="22" cy="22" r="9" fill="#0b57a0"/><text x="22" y="26.500" font-size="12" text-anchor="middle" fill="#dbe9f7">M</text></svg></button>
  </div>
  <div class="tray d-flex align-items-center ms-auto">
    <svg width="30" height="28" viewBox="0 0 30 28"><path d="M20 0q2 7 7 10 5 12-6 17-9 3-15-5Q18 24 20 0z" fill="#f59e1f"/><path d="M12 4q-7 8-4 16 8 6 16-1Q20 8 20 1z" fill="#f59e1f"/><path d="M8 5h12M2 10h22M6 15h14M1 20h18" stroke="#e5c887" stroke-width="2.800" stroke-linecap="round"/></svg>
    <span class="weather">26°C</span>
    <svg width="16" height="9" viewBox="0 0 16 9"><path d="M1 8l7-7 7 7" fill="none" stroke="#fff" stroke-width="1.500"/></svg>
    <svg width="18" height="18" viewBox="0 0 18 18" fill="none" stroke="#fff" stroke-width="1.400"><rect x="3" y="5" width="9" height="9" rx="2"/><path d="M12 8l3-2v7l-3-2M4 2q4-2 7 0M4 17q4 1.500 7 0"/></svg>
    <svg width="19" height="11" viewBox="0 0 19 11"><path d="M.7.700h16v9.600H.7zM18 3.500v4" fill="none" stroke="#fff" stroke-width="1.400"/><path d="M3 3h3v5H3z" fill="#fff"/></svg>
    <svg width="17" height="17" viewBox="0 0 17 17" fill="none" stroke="#fff" stroke-width="1.300"><path d="M1 16Q1 3 15 1.500M5 16Q5 7 15 6M9 16q0-5 6-6"/><circle cx="13" cy="14" r="1.500" fill="#fff"/></svg>
    <svg width="20" height="16" viewBox="0 0 20 16" fill="none" stroke="#fff" stroke-width="1.300"><path d="M1 5.500h3l4-4v13l-4-4H1zM11 5.500q1.500 2.500 0 5M13.500 3.500q3 4.500 0 9M16 1.500q4.500 6.500 0 13"/></svg>
    <span>ENG</span>
    <div class="clock text-center">11:12 PM<br>11/23/2023</div>
    <button class="plain-btn" aria-label="Notifications"><svg width="34" height="40" viewBox="0 0 34 40"><path d="M1 5h19v16H9l-4 4v-4H1z" fill="#fff"/><path d="M4 10h13M4 14h13M4 18h8" stroke="#222" stroke-width="1.500"/><circle cx="20" cy="25" r="10.500" fill="#333" stroke="#999"/><text x="20" y="30" font-size="13" text-anchor="middle" fill="#fff">13</text></svg></button>
    <span class="show-desktop"></span>
  </div>
</footer>
</body>
</html>
